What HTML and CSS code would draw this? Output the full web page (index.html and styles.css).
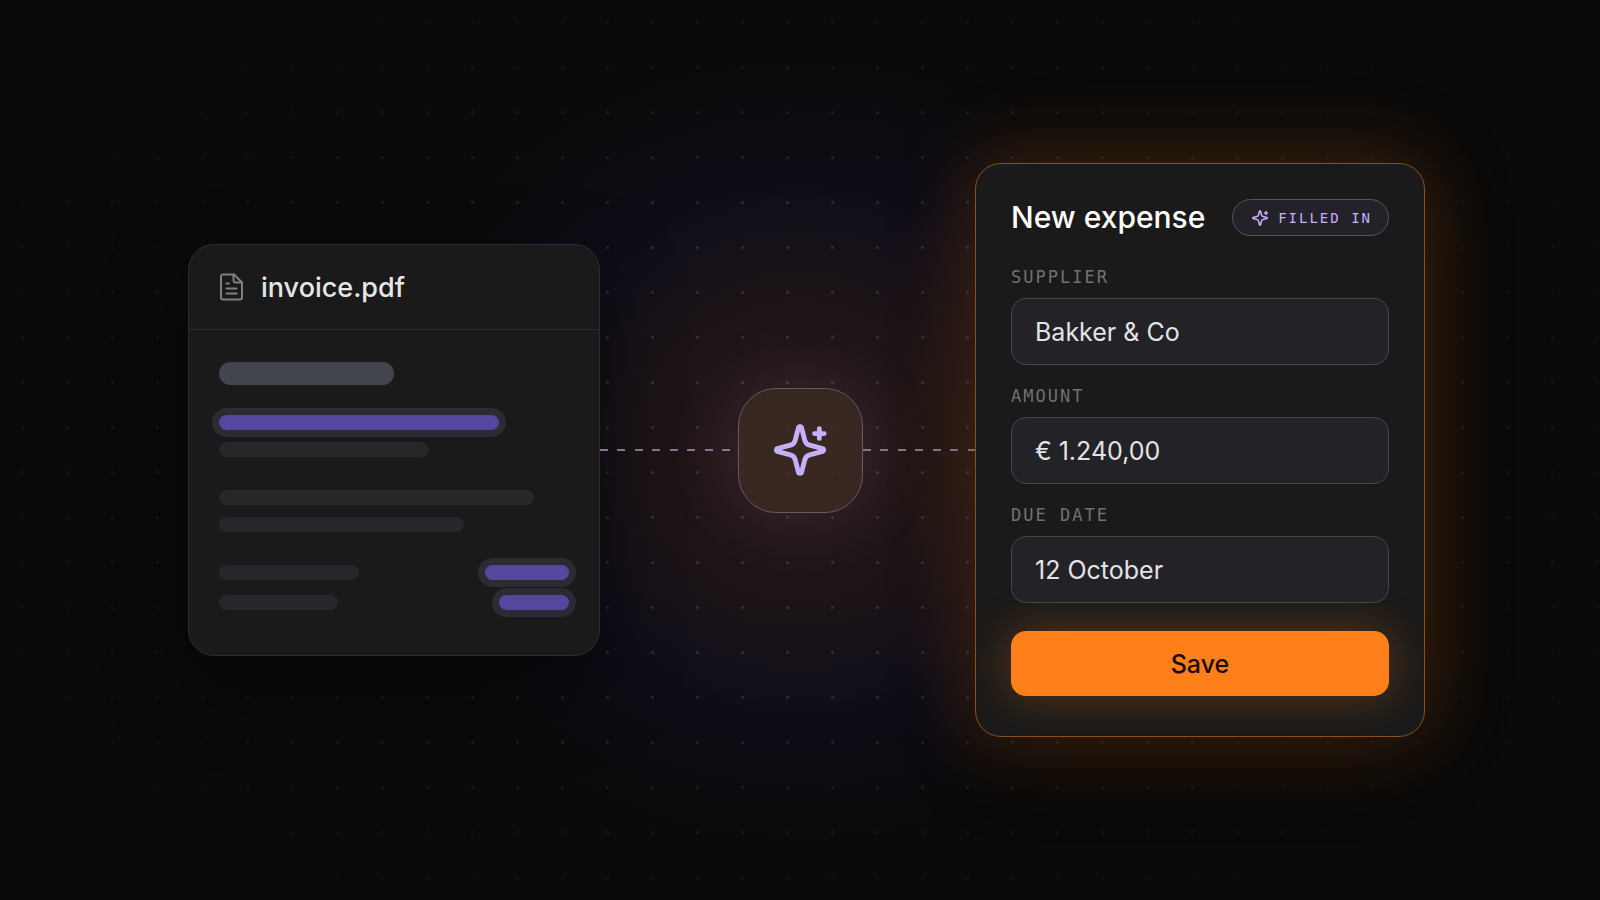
FILE: index.html
```html
<!DOCTYPE html>
<html lang="en">
<head>
    <meta charset="UTF-8" />
    <meta name="viewport" content="width=device-width, initial-scale=1.0" />
    <title>New expense</title>
    <link rel="stylesheet" href="styles.css">
</head>
<body>
    <main class="stage">
        <div class="side">
            <section class="card doc">
                <header class="doc-header">
                    <svg class="doc-icon" viewBox="0 0 24 28" fill="none" stroke="currentColor" stroke-width="2" stroke-linecap="round" stroke-linejoin="round">
                        <path d="M15 1.5H4a2 2 0 0 0-2 2v21a2 2 0 0 0 2 2h17a2 2 0 0 0 2-2V9.5z" />
                        <path d="M14.5 1.5V7a2.5 2.5 0 0 0 2.5 2.5h6" />
                        <path d="M7.5 10.5h2.5M7.5 15.5h10M7.5 20.5h10" />
                    </svg>
                    <h2 class="doc-name">invoice.pdf</h2>
                </header>
                <div class="doc-body">
                    <div class="group">
                        <span class="bar bar-title"></span>
                        <span class="bar bar-found w-80"></span>
                        <span class="bar w-60"></span>
                    </div>
                    <div class="group">
                        <span class="bar w-90"></span>
                        <span class="bar w-70"></span>
                    </div>
                    <div class="group group-totals">
                        <div class="bar-row">
                            <span class="bar w-40"></span>
                            <span class="bar bar-found w-24"></span>
                        </div>
                        <div class="bar-row">
                            <span class="bar w-34"></span>
                            <span class="bar bar-found w-20"></span>
                        </div>
                    </div>
                </div>
            </section>
            <div class="connector"></div>
        </div>

        <div class="hub">
            <svg class="hub-icon" viewBox="0 0 60 60" fill="none" stroke="currentColor" stroke-width="5" stroke-linecap="round" stroke-linejoin="round">
                <path d="M28.5 6.5Q30 5 31.5 6.5L35 20Q36 24 40 25L53.5 28.5Q55.5 30 53.5 31.5L40 35Q36 36 35 40L31.5 53.5Q30 55 28.5 53.5L25 40Q24 36 20 35L6.5 31.5Q4.5 30 6.5 28.5L20 25Q24 24 25 20Z" />
                <path d="M50 8v10M45 13h10" />
            </svg>
        </div>

        <div class="side">
            <div class="connector"></div>
            <form class="card expense">
                <header class="expense-header">
                    <h1 class="expense-title">New expense</h1>
                    <span class="badge">
                        <svg class="badge-icon" viewBox="0 0 60 60" fill="none" stroke="currentColor" stroke-width="5" stroke-linecap="round" stroke-linejoin="round">
                            <path d="M28.5 6.5Q30 5 31.5 6.5L35 20Q36 24 40 25L53.5 28.5Q55.5 30 53.5 31.5L40 35Q36 36 35 40L31.5 53.5Q30 55 28.5 53.5L25 40Q24 36 20 35L6.5 31.5Q4.5 30 6.5 28.5L20 25Q24 24 25 20Z" />
                            <path d="M50 8v10M45 13h10" />
                        </svg>
                        FILLED IN
                    </span>
                </header>
                <div class="field">
                    <label for="supplier">SUPPLIER</label>
                    <input type="text" id="supplier" value="Bakker &amp; Co" />
                </div>
                <div class="field">
                    <label for="amount">AMOUNT</label>
                    <input type="text" id="amount" value="€ 1.240,00" />
                </div>
                <div class="field">
                    <label for="due">DUE DATE</label>
                    <input type="text" id="due" value="12 October" />
                </div>
                <button type="button" class="save">Save</button>
            </form>
        </div>
    </main>
</body>
</html>
```
FILE: styles.css
```css
* {
    box-sizing: border-box;
}

body {
    margin: 0;
    background: #0a0a0a;
    color: #fff;
    font-family: Inter, "Liberation Sans", sans-serif;
}

.stage {
    position: relative;
    isolation: isolate;
    display: grid;
    grid-template-columns: 1fr 125px 1fr;
    align-items: center;
    min-height: 100vh;
    overflow: hidden;
    background:
        radial-gradient(circle 270px at center, rgba(255, 125, 25, 0.12), rgba(255, 125, 25, 0.05) 60%, transparent),
        radial-gradient(ellipse 440px 400px at center, rgba(85, 65, 180, 0.06), rgba(75, 60, 220, 0.07) 60%, transparent);
}

/* dot grid, fading towards the edges */
.stage::before {
    content: "";
    position: absolute;
    inset: 0;
    z-index: -1;
    background: radial-gradient(circle at center, rgba(255, 255, 255, 0.12) 1px, transparent 2px) 0 0 / 45px 45px;
    -webkit-mask-image: radial-gradient(ellipse at center, #000 35%, transparent 85%);
    mask-image: radial-gradient(ellipse at center, #000 35%, transparent 85%);
}

.side {
    display: flex;
    align-items: center;
}

.side:first-child {
    padding-left: 188px;
}

.side:last-child {
    padding-right: 175px;
}

.card {
    background: #1a1a1a;
    border: 1px solid #2c2c2e;
    border-radius: 26px;
}

.connector {
    flex: 1;
    height: 2px;
    background: repeating-linear-gradient(90deg,
        #85768f 0 8px, transparent 8px 17px,
        #85768f 17px 25px, transparent 25px 35px);
}

/* document */
.doc {
    width: 412px;
    box-shadow: 0 30px 75px rgba(0, 0, 0, 0.5);
}

.doc-header {
    display: flex;
    align-items: center;
    gap: 18px;
    height: 85px;
    padding: 0 30px;
    border-bottom: 1px solid #2c2c2e;
}

.doc-icon {
    width: 24px;
    height: 28px;
    color: #808082;
}

.doc-name {
    margin: 0;
    font-size: 27px;
    font-weight: 500;
    color: #e6e6e8;
}

.doc-body {
    display: flex;
    flex-direction: column;
    gap: 33px;
    padding: 32px 30px 45px;
}

.group {
    display: flex;
    flex-direction: column;
    gap: 12px;
}

.group-totals {
    gap: 15px;
}

.bar-row {
    display: flex;
    justify-content: space-between;
}

.bar {
    height: 15px;
    border-radius: 8px;
    background: #27272b;
}

.bar-title {
    width: 50%;
    height: 23px;
    margin-bottom: 18px;
    border-radius: 12px;
    background: #42454d;
}

.bar-found {
    background: #5746a0;
    box-shadow: 0 0 0 7px #2c2b33;
}

.w-20 { width: 20%; }
.w-24 { width: 24%; }
.w-34 { width: 34%; }
.w-40 { width: 40%; }
.w-60 { width: 60%; }
.w-70 { width: 70%; }
.w-80 { width: 80%; }
.w-90 { width: 90%; }

/* hub */
.hub {
    display: flex;
    align-items: center;
    justify-content: center;
    height: 125px;
    border: 1px solid #67586a;
    border-radius: 38px;
    background: rgba(62, 46, 38, 0.75);
    box-shadow: 0 0 75px rgba(167, 139, 250, 0.15);
}

.hub-icon {
    width: 58px;
    height: 58px;
    color: #c4b0fb;
}

/* expense form */
.expense {
    width: 450px;
    padding: 35px 35px 40px;
    border-color: #8a4f1c;
    box-shadow: 0 0 85px rgba(255, 125, 25, 0.26), 0 30px 75px rgba(0, 0, 0, 0.3);
}

.expense-header {
    display: flex;
    align-items: center;
    justify-content: space-between;
    margin-bottom: 30px;
}

.expense-title {
    margin: 0;
    font-size: 30px;
    font-weight: 500;
    line-height: 37px;
}

.badge {
    display: flex;
    align-items: center;
    gap: 9px;
    height: 37px;
    padding: 0 16px 0 18px;
    border: 1px solid #55545e;
    border-radius: 19px;
    background: #232228;
    color: #c4b0fb;
    font-family: "DejaVu Sans Mono", monospace;
    font-size: 14px;
    letter-spacing: 2px;
    white-space: nowrap;
}

.badge-icon {
    width: 18px;
    height: 18px;
}

.field {
    display: flex;
    flex-direction: column;
    gap: 10px;
    margin-bottom: 20px;
}

.field label {
    color: #717171;
    font-family: "DejaVu Sans Mono", monospace;
    font-size: 17px;
    line-height: 22px;
    letter-spacing: 2px;
}

.field input {
    width: 100%;
    height: 67px;
    padding: 0 23px;
    border: 1px solid #45454b;
    border-radius: 15px;
    background: #232227;
    color: #e3e3e6;
    font-family: inherit;
    font-size: 25px;
}

.save {
    display: block;
    width: 100%;
    height: 65px;
    margin-top: 28px;
    border: none;
    border-radius: 15px;
    background: #ff7f1a;
    box-shadow: 0 0 45px rgba(255, 127, 26, 0.3);
    color: #1a0a05;
    font-family: inherit;
    font-size: 25px;
    font-weight: 500;
    cursor: pointer;
}
```
